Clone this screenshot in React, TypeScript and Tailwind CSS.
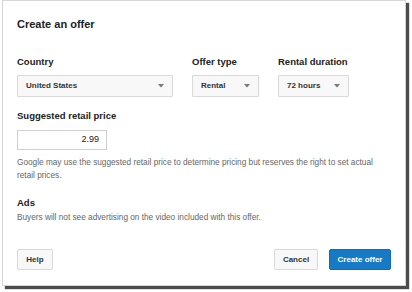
import React from "react";

const Caret: React.FC = () => (
  <svg width="6" height="4" viewBox="0 0 6 4" className="shrink-0">
    <path d="M0 0 L6 0 L3 3.5 Z" fill="#777" />
  </svg>
);

const Select: React.FC<{ value: string; width: string }> = ({ value, width }) => (
  <div
    className={`${width} h-[22px] flex items-center justify-between pl-[8px] pr-[8px] bg-[#f8f8f8] border border-[#d9d9d9] rounded-[1px] text-[8px] font-bold text-[#333]`}
  >
    <span>{value}</span>
    <Caret />
  </div>
);

const Field: React.FC<{ label: string; children: React.ReactNode }> = ({ label, children }) => (
  <div className="flex flex-col">
    <div className="h-[14px] leading-[14px] text-[9.5px] font-bold text-[#222]">{label}</div>
    <div className="mt-[6px]">{children}</div>
  </div>
);

export default function App() {
  return (
    <div className="w-[412px] h-[292px] bg-white" style={{ fontFamily: '"Liberation Sans", Arial, sans-serif' }}>
      <div className="ml-[2px] w-[404px] h-[286px] bg-white border border-[#d6d6d6] shadow-[3px_3px_1px_rgba(0,0,0,0.7)] px-[14px] flex flex-col">
        <div className="h-[46px] flex items-center text-[11px] font-bold text-[#222]">Create an offer</div>

        <div className="mt-[8px] flex gap-[19px]">
          <Field label="Country">
            <Select value="United States" width="w-[156px]" />
          </Field>
          <Field label="Offer type">
            <Select value="Rental" width="w-[67px]" />
          </Field>
          <Field label="Rental duration">
            <Select value="72 hours" width="w-[71px]" />
          </Field>
        </div>

        <div className="mt-[12px] h-[14px] leading-[14px] text-[9.5px] font-bold text-[#222]">Suggested retail price</div>
        <div className="mt-[7px] w-[90px] h-[20px] border border-[#d0d0d0] flex items-center justify-end pr-[7px] text-[9px] text-[#222]">
          2.99
        </div>

        <p className="mt-[6px] w-[362px] text-[8.25px] leading-[13px] text-[#666]">
          Google may use the suggested retail price to determine pricing but reserves the right to set actual retail prices.
        </p>

        <div className="mt-[14px] h-[14px] leading-[14px] text-[9.5px] font-bold text-[#222]">Ads</div>
        <p className="mt-[1px] text-[8.25px] leading-[13px] text-[#666]">
          Buyers will not see advertising on the video included with this offer.
        </p>

        <div className="mt-[25px] flex items-center">
          <button className="w-[36px] h-[21px] bg-[#f8f8f8] border border-[#d9d9d9] rounded-[2px] text-[8px] font-bold text-[#333]">
            Help
          </button>
          <div className="flex-1" />
          <button className="w-[44px] h-[21px] bg-[#f8f8f8] border border-[#d9d9d9] rounded-[2px] text-[8px] font-bold text-[#333]">
            Cancel
          </button>
          <button className="ml-[11px] w-[62px] h-[21px] bg-[#167ac6] border border-[#126db3] rounded-[2px] text-[8px] font-bold text-white">
            Create offer
          </button>
        </div>
      </div>
    </div>
  );
}
